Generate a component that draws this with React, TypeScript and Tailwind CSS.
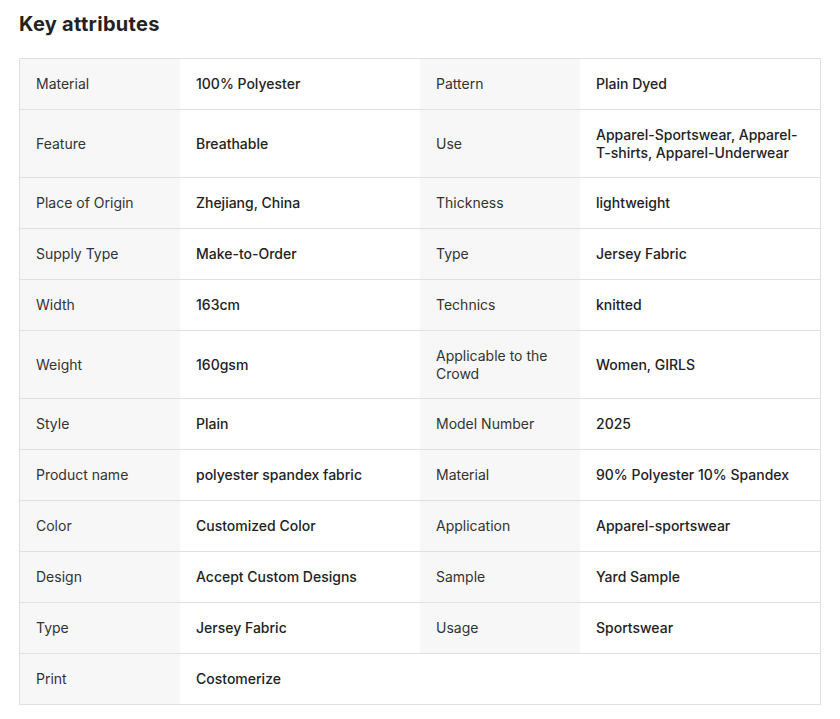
import React from 'react'

type Attr = [string, string]

const attrs: Attr[] = [
  ['Material', '100% Polyester'],
  ['Pattern', 'Plain Dyed'],
  ['Feature', 'Breathable'],
  ['Use', 'Apparel-Sportswear, Apparel-T-shirts, Apparel-Underwear'],
  ['Place of Origin', 'Zhejiang, China'],
  ['Thickness', 'lightweight'],
  ['Supply Type', 'Make-to-Order'],
  ['Type', 'Jersey Fabric'],
  ['Width', '163cm'],
  ['Technics', 'knitted'],
  ['Weight', '160gsm'],
  ['Applicable to the Crowd', 'Women, GIRLS'],
  ['Style', 'Plain'],
  ['Model Number', '2025'],
  ['Product name', 'polyester spandex fabric'],
  ['Material', '90% Polyester 10% Spandex'],
  ['Color', 'Customized Color'],
  ['Application', 'Apparel-sportswear'],
  ['Design', 'Accept Custom Designs'],
  ['Sample', 'Yard Sample'],
  ['Type', 'Jersey Fabric'],
  ['Usage', 'Sportswear'],
  ['Print', 'Costomerize'],
]

const Pair: React.FC<{ item?: Attr }> = ({ item }) => {
  if (!item) {
    return (
      <>
        <div className="w-[160px] shrink-0" />
        <div className="w-[240px] shrink-0" />
      </>
    )
  }
  return (
    <>
      <div className="w-[160px] min-h-[50px] shrink-0 bg-[#f7f7f7] px-4 py-4 flex items-center text-[#333]">
        {item[0]}
      </div>
      <div className="w-[240px] min-h-[50px] shrink-0 px-4 py-4 flex items-center font-medium text-[#222]">
        {item[1]}
      </div>
    </>
  )
}

export default function App() {
  const rows: Attr[][] = []
  for (let i = 0; i < attrs.length; i += 2) rows.push(attrs.slice(i, i + 2))

  return (
    <div
      className="min-h-[719px] bg-white px-[19px] pt-[10px] pb-[14px]"
      style={{ fontFamily: 'Inter, "Noto Sans", sans-serif' }}
    >
      <h2 className="text-[20px] leading-[28px] font-bold tracking-[0.3px] text-[#222] mb-[20px]">
        Key attributes
      </h2>
      <div className="w-[802px] border border-[#e0e0e0] border-b-0 text-[14px] leading-[17.5px]">
        {rows.map((row, i) => (
          <div key={i} className="flex border-b border-[#e0e0e0]">
            <Pair item={row[0]} />
            <Pair item={row[1]} />
          </div>
        ))}
      </div>
    </div>
  )
}
